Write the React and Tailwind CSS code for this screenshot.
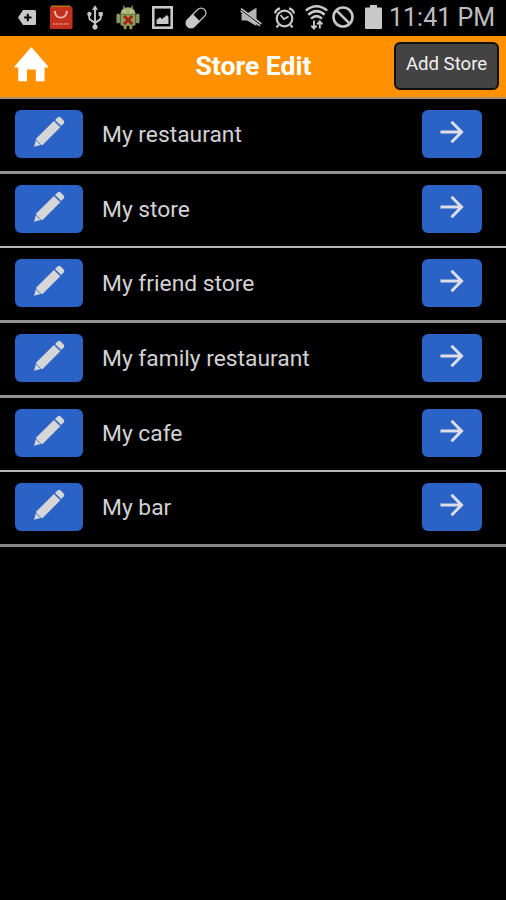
const stores = [
  { name: "My restaurant", row: "h-[75px] border-b-3 border-[#929292]" },
  { name: "My store", row: "h-[74px] border-b-2 border-[#b4b4b4]" },
  { name: "My friend store", row: "h-[75px] border-b-3 border-[#929292]" },
  { name: "My family restaurant", row: "h-[75px] border-b-3 border-[#929292]" },
  { name: "My cafe", row: "h-[74px] border-b-2 border-[#b4b4b4]" },
  { name: "My bar", row: "h-[75px] border-b-3 border-[#858585]" },
];

const PencilIcon = () => (
  <svg width="32" height="32" viewBox="0 0 32 32" fill="#d6d6d6">
    <path d="M1 30.8 L2.9 24.2 L7.6 28.9 Z" />
    <path d="M3.2 22.6 L20.9 4.9 L27.3 11.3 L9.6 29 Q8.6 29.2 7.9 28.5 L3.6 24.2 Q2.9 23.5 3.2 22.6 Z" />
    <path d="M22 3.9 L24.8 1.2 Q26.2 .2 27.6 1.4 L30.6 4.4 Q31.8 5.8 30.8 7.3 L28.2 10.1 Z" />
  </svg>
);

const ArrowIcon = () => (
  <svg width="24" height="24" viewBox="0 0 24 24" fill="none" stroke="#dedee4" strokeWidth="2.9">
    <path d="M.5 12 H21.5 M11.5 1.8 L21.6 12 L11.5 22.2" />
  </svg>
);

const StatusBar = () => (
  <div className="flex h-9 items-start bg-black pl-[18px]">
    {/* tag */}
    <svg className="mt-2.5 shrink-0" width="18" height="15" viewBox="0 0 18 15">
      <path d="M5 0 H16.5 Q18 0 18 1.5 V13.5 Q18 15 16.5 15 H5 L0 7.5 Z" fill="#c8c8c8" />
      <path d="M9.8 3.8 V11.2 M6.1 7.5 H13.5" stroke="#050505" strokeWidth="2" />
    </svg>
    {/* shopping bag */}
    <svg className="mt-[5px] ml-[13px] shrink-0" width="24" height="24" viewBox="0 0 24 24">
      <path d="M2.5 .5 H21 L22.5 3 H1 Z" fill="#b57716" />
      <rect x="1" y="2" width="22.5" height="22" rx="1" fill="#c4301c" />
      <path d="M6 7.2 C7 14.5 16.5 14.5 17.8 7.2" fill="none" stroke="#e8b9ae" strokeWidth="1.7" />
      <circle cx="6" cy="7" r="1.2" fill="#e8b9ae" />
      <circle cx="17.8" cy="7" r="1.2" fill="#e8b9ae" />
      <path d="M4 19 H20" stroke="#dc8877" strokeWidth="1.4" strokeDasharray="2 .7" />
    </svg>
    {/* usb */}
    <svg className="mt-[5px] ml-[14px] shrink-0" width="16" height="25" viewBox="0 0 16 25" fill="#c8c8c8" stroke="#c8c8c8">
      <path d="M8 3 V22 M2.2 9 V12.5 Q2.2 14.5 4 15.2 L8 18 M13.8 9 V12.5 Q13.8 14.5 12 15.2 L8 18" fill="none" strokeWidth="1.9" />
      <path d="M8 .8 L10.4 4.6 H5.6 Z" strokeWidth=".8" />
      <circle cx="2.4" cy="9" r="1.9" strokeWidth=".6" />
      <rect x="11.9" y="7.2" width="3.7" height="3.7" strokeWidth=".4" />
      <circle cx="8" cy="22" r="2.4" strokeWidth=".5" />
    </svg>
    {/* android with a cross */}
    <svg className="mt-[5px] ml-[13px] shrink-0" width="24" height="25" viewBox="0 0 24 25" fill="#8c9e58">
      <path d="M7 .8 L9 3.6 M17 .8 L15 3.6" stroke="#8c9e58" strokeWidth="1.2" />
      <path d="M4.3 9.4 Q4.8 2.2 12 2.2 Q19.2 2.2 19.7 9.4 Z" fill="#a6b376" />
      <rect x=".4" y="8.5" width="3.7" height="10" rx="1.8" fill="#879467" />
      <rect x="19.9" y="8.5" width="3.7" height="10" rx="1.8" fill="#879467" />
      <path d="M4.4 9.6 H19.6 V19 Q19.6 20.8 18 20.8 H16.4 V23.4 Q14.8 25.4 13.4 23.4 V20.8 H10.6 V23.4 Q9.2 25.4 7.6 23.4 V20.8 H6 Q4.4 20.8 4.4 19 Z" />
      <circle cx="8.8" cy="6.3" r=".9" fill="#dce0ce" />
      <circle cx="15.2" cy="6.3" r=".9" fill="#dce0ce" />
      <path d="M8 11 L16.3 19.3 M16.3 11 L8 19.3" stroke="#a92115" strokeWidth="2.8" />
    </svg>
    {/* picture */}
    <svg className="mt-1.5 ml-3 shrink-0" width="21" height="23" viewBox="0 0 21 23">
      <rect x="1.3" y="1.3" width="18.4" height="20.4" fill="none" stroke="#c8c8c8" strokeWidth="2.6" />
      <path d="M4.5 18 V14 L8 11.2 L10 13 L15 9 L16.5 11 V18 Z" fill="#c8c8c8" />
    </svg>
    {/* pill */}
    <svg className="mt-[7px] ml-3 shrink-0" width="22" height="22" viewBox="0 0 22 22">
      <g transform="rotate(-45 11 11)">
        <rect x="-1" y="6.2" width="24" height="9.6" rx="4.8" fill="none" stroke="#bcbcbc" strokeWidth="1.3" />
        <path d="M11.5 6 H4 A5 5 0 0 0 4 16 H11.5 Z" fill="#c8c8c8" />
      </g>
    </svg>
    {/* muted speaker */}
    <svg className="mt-[7px] ml-[33px] shrink-0" width="22" height="20" viewBox="0 0 22 20">
      <path d="M1.5 6.5 H7 L16.5 .8 V19 L7 13.5 H1.5 Z" fill="#b4b4b4" />
      <path d="M.8 2.8 L20.5 17.6" stroke="#050505" strokeWidth="3.4" />
      <path d="M1 1.6 L21.5 16.8 M.5 4 L20 18.8" stroke="#c8c8c8" strokeWidth="1.5" />
    </svg>
    {/* alarm */}
    <svg className="mt-[7px] ml-[12px] shrink-0" width="21" height="21" viewBox="0 0 21 21" fill="none" stroke="#c8c8c8" strokeWidth="2.2">
      <circle cx="10.5" cy="11.5" r="7.8" />
      <path d="M6.5 8 L10 12 L14.5 9.5" strokeWidth="1.8" />
      <path d="M1 6.5 Q1.7 2.6 6 1.4 M20 6.5 Q19.3 2.6 15 1.4 M4.6 18 L2.4 20.4 M16.4 18 L18.6 20.4" />
    </svg>
    {/* wifi with traffic arrows */}
    <svg className="mt-[5px] ml-[10px] shrink-0" width="23" height="25" viewBox="0 0 23 25" fill="none" stroke="#c8c8c8" strokeWidth="2.5">
      <path d="M.8 5.6 Q11.5 -3 22.2 5.6" />
      <path d="M3.3 9.7 Q11.5 2.6 19.7 9.7" />
      <path d="M6 13.6 Q11.5 8.7 17 13.6" />
      <path d="M9 15.4 V23 M6.3 20.6 L9 23.6 L11.7 20.6 M14.8 23.5 V17 M12.1 19.3 L14.8 16.3 L17.5 19.3" strokeWidth="1.9" />
    </svg>
    {/* blocked */}
    <svg className="mt-1.5 ml-1 shrink-0" width="22" height="22" viewBox="0 0 22 22" fill="none" stroke="#c8c8c8" strokeWidth="2.6">
      <circle cx="11" cy="11" r="9.5" />
      <path d="M4.3 4.3 L17.7 17.7" />
    </svg>
    {/* battery */}
    <svg className="mt-[5px] ml-[11px] shrink-0" width="17" height="24" viewBox="0 0 17 24" fill="#c8c8c8">
      <path d="M5 0 H12 V2.4 H16 Q17 2.4 17 3.4 V23 Q17 24 16 24 H1 Q0 24 0 23 V3.4 Q0 2.4 1 2.4 H5 Z" />
    </svg>
    <span className="ml-[7px] text-[25px] leading-[35px] whitespace-nowrap text-[#bdbdbd]">11:41 PM</span>
  </div>
);

const StoreRow = ({ store }) => (
  <li className={`flex items-start pt-[11px] pr-6 pl-[15px] ${store.row}`}>
    <button type="button" aria-label="Edit" className="flex h-12 w-[68px] shrink-0 justify-center rounded-md bg-[#2b62c6] pt-1.5">
      <PencilIcon />
    </button>
    <span className="ml-[19px] flex-1 text-[22.8px] leading-[50px] whitespace-nowrap text-[#d2d2d2]">{store.name}</span>
    <button type="button" aria-label="Open" className="flex h-12 w-[60px] shrink-0 justify-center rounded-md bg-[#2b62c6] pt-[10px]">
      <ArrowIcon />
    </button>
  </li>
);

const App = () => {
  return (
    <div className="h-[900px] w-[506px] overflow-hidden bg-black font-['Roboto',sans-serif]">
      <StatusBar />
      <header className="grid h-[63px] grid-cols-[1fr_auto_1fr] items-start border-b-2 border-[#a89271] bg-[#ff9000] pr-[7px] pl-[14px]">
        <svg className="mt-[11px]" width="34" height="35" viewBox="0 0 34 35" fill="#fff">
          <path d="M17.3 0 L34 19.3 V20.5 H30.6 V34.3 H21.8 V22.5 H13 V34.3 H4.2 V20.5 H.6 V19.3 Z" />
        </svg>
        <h1 className="mr-[6px] text-[26.6px] leading-[59px] font-bold whitespace-nowrap text-white">Store Edit</h1>
        <button type="button" className="mt-[6px] h-12 w-[105px] justify-self-end rounded-md border-2 border-[#111] bg-[#434343] pb-0.5 text-[18.6px] whitespace-nowrap text-[#f2f2f2]">
          Add Store
        </button>
      </header>
      <ul>
        {stores.map((store) => (
          <StoreRow key={store.name} store={store} />
        ))}
      </ul>
    </div>
  );
};

export default App;
